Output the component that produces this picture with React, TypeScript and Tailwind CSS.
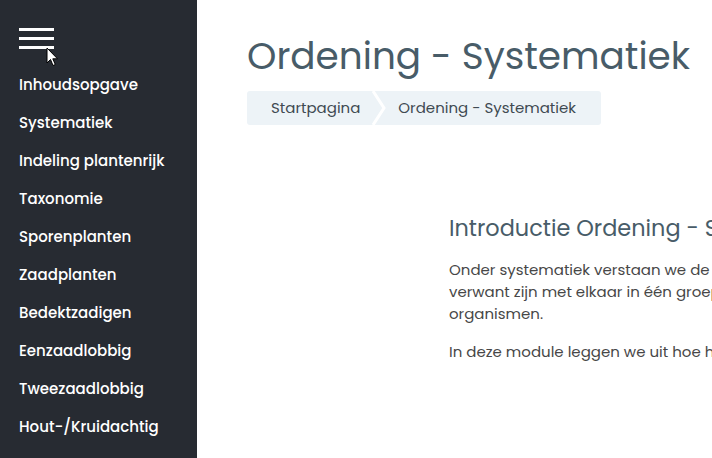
import React from "react";

const menu = [
  "Inhoudsopgave",
  "Systematiek",
  "Indeling plantenrijk",
  "Taxonomie",
  "Sporenplanten",
  "Zaadplanten",
  "Bedektzadigen",
  "Eenzaadlobbig",
  "Tweezaadlobbig",
  "Hout-/Kruidachtig",
];

const Sidebar = () => {
  return (
    <aside className="relative w-[197px] shrink-0 bg-[#272b32] pt-[28px]">
      <button className="ml-[19px] flex w-[35px] flex-col gap-[6px]">
        <span className="block h-[3px] w-full bg-white" />
        <span className="block h-[3px] w-full bg-white" />
        <span className="block h-[3px] w-full bg-white" />
      </button>
      <svg
        className="absolute left-[46px] top-[47px]"
        width="13"
        height="20"
        viewBox="0 0 13 20"
      >
        <path
          d="M1 1 L1 16 L4.5 12.5 L7 18.5 L9.3 17.5 L6.8 11.8 L11.5 11.8 Z"
          fill="white"
          stroke="black"
          strokeWidth="1"
        />
      </svg>
      <nav className="mt-[17px] flex flex-col">
        {menu.map((item) => (
          <a
            key={item}
            className="flex h-[38px] items-center pl-[19px] text-[15px] font-medium text-white"
          >
            {item}
          </a>
        ))}
      </nav>
    </aside>
  );
};

export default function App() {
  return (
    <div className="flex h-[458px] w-[712px] overflow-hidden bg-white font-['Poppins','Open_Sans',sans-serif]">
      <Sidebar />
      <main className="min-w-0 flex-1 overflow-hidden pl-[50px] pt-[33px]">
        <h1 className="whitespace-nowrap text-[37.4px] leading-[46px] text-[#485c68]">
          Ordening - Systematiek
        </h1>
        <div className="mt-[12px] flex h-[34px] w-fit items-center rounded-[3px] bg-[#edf3f7] pl-[24px] pr-[25px] text-[15px] text-[#3f4a52]">
          <span>Startpagina</span>
          <svg className="mx-[12px]" width="14" height="34" viewBox="0 0 14 34">
            <path d="M1 0 L12 17 L1 34" fill="none" stroke="white" strokeWidth="3" />
          </svg>
          <span>Ordening - Systematiek</span>
        </div>
        <section className="ml-[202px] mt-[88px] w-[700px] text-[#474747]">
          <h2 className="whitespace-nowrap text-[22.4px] leading-[30px] text-[#485c68]">
            Introductie Ordening - Systematiek
          </h2>
          <p className="mt-[16px] whitespace-nowrap text-[15px] leading-[22px]">
            Onder systematiek verstaan we de indeling van organismen in groepen, waarbij organismen die nauw
            <br />
            verwant zijn met elkaar in één groep worden geplaatst op basis van overeenkomsten tussen de
            <br />
            organismen.
          </p>
          <p className="mt-[16px] whitespace-nowrap text-[15px] leading-[22px]">
            In deze module leggen we uit hoe het plantenrijk is ingedeeld.
          </p>
        </section>
      </main>
    </div>
  );
}
